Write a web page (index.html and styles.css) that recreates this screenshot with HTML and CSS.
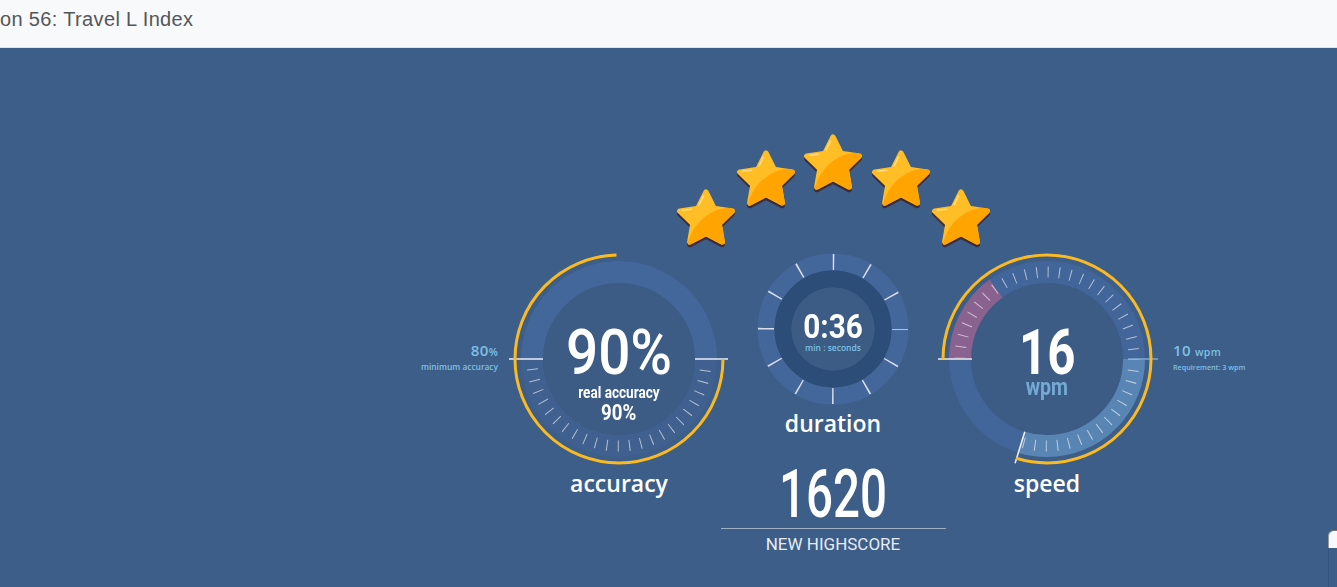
FILE: index.html
```html
<!DOCTYPE html>
<html lang="en">
<head>
<meta charset="utf-8">
<title>Travel L Index - Results</title>
<link rel="stylesheet" href="styles.css">
</head>
<body>
<header class="topbar">
  <h1 class="topbar-title">on 56: Travel L Index</h1>
</header>
<main class="stage">
  <svg class="stars" viewBox="0 0 340 115" width="340" height="115" aria-label="5 stars">
    <defs>
      <path id="star-shape" d="M30 5L37.35 19.89L53.78 22.27L41.89 33.86L44.69 50.23L30 42.5L15.31 50.23L18.11 33.86L6.22 22.27L22.65 19.89Z" stroke-linejoin="round" stroke-width="5"/>
      <mask id="star-mask"><use href="#star-shape" fill="#fff" stroke="#fff"/></mask>
      <g id="star">
        <use href="#star-shape" transform="translate(0 2.4)" fill="#3b2d3c" stroke="#3b2d3c"/>
        <use href="#star-shape" fill="#ffbd26" stroke="#ffbd26"/>
        <circle cx="55.5" cy="61.5" r="43" fill="#ffa400" mask="url(#star-mask)"/>
        <path d="M27.6 8.6L23.8 16.6M8.5 21.6L17 20.6" stroke="#ffe7a0" stroke-width="1.4" stroke-linecap="round" fill="none" opacity=".75"/>
      </g>
    </defs>
    <use href="#star" transform="translate(10 62.6) scale(1.1)"/>
    <use href="#star" transform="translate(70 23.6) scale(1.1)"/>
    <use href="#star" transform="translate(137 7.6) scale(1.1)"/>
    <use href="#star" transform="translate(205 23.6) scale(1.1)"/>
    <use href="#star" transform="translate(265 62.6) scale(1.1)"/>
  </svg>

  <div class="gauges">
    <section class="col">
      <div class="gauge gauge-lg">
        <svg class="dial" viewBox="0 0 240 228" width="240" height="228">
          <defs><clipPath id="acc-lower"><rect x="0" y="122" width="240" height="106"/></clipPath></defs>
          <circle cx="120" cy="120" r="76" fill="#3c5c86"/>
          <path d="M33 120A87 87 0 0 1 207 120" fill="none" stroke="#44679b" stroke-width="22"/>
          <path d="M207 120A87 87 0 0 1 33 120" fill="none" stroke="#40618f" stroke-width="22"/>
          <circle cx="120" cy="120" r="87" fill="none" stroke="rgba(255,255,255,.6)" stroke-width="11" stroke-dasharray="1 10.388" clip-path="url(#acc-lower)"/>
          <line x1="10" y1="120" x2="44" y2="120" stroke="#e9eef5" stroke-width="1.5"/>
          <line x1="196" y1="120" x2="229" y2="120" stroke="#e9eef5" stroke-width="1.5"/>
          <circle cx="120" cy="120" r="104" fill="none" stroke="#fbba22" stroke-width="3" stroke-dasharray="487 1000"/>
        </svg>
        <div class="annot annot-left">
          <div class="annot-value">80<span class="annot-unit">%</span></div>
          <div class="annot-note">minimum accuracy</div>
        </div>
        <div class="gauge-center gauge-center-acc">
          <span class="cond big-acc">90%</span>
          <span class="cond sub-title">real accuracy</span>
          <span class="cond sub-value">90%</span>
        </div>
      </div>
      <div class="label">accuracy</div>
    </section>

    <section class="col">
      <div class="gauge gauge-sm">
        <svg class="dial" viewBox="0 0 160 160" width="160" height="160">
          <circle cx="80" cy="80" r="67" fill="none" stroke="#44679b" stroke-width="17"/>
          <circle cx="80" cy="80" r="50" fill="none" stroke="#2c4d78" stroke-width="17"/>
          <circle cx="80" cy="80" r="41.5" fill="#3c5c86"/>
          <circle cx="80" cy="80" r="67" fill="none" stroke="rgba(255,255,255,.8)" stroke-width="16" stroke-dasharray="1.5 33.58" stroke-dashoffset="0.75"/>
        </svg>
        <div class="gauge-center gauge-center-time">
          <span class="cond time-value">0:36</span>
          <span class="time-unit">min : seconds</span>
        </div>
      </div>
      <div class="label label-duration">duration</div>
      <div class="highscore">
        <div class="hs-score"><span class="cond hs-num">1620</span></div>
        <div class="hs-caption">NEW HIGHSCORE</div>
      </div>
    </section>

    <section class="col">
      <div class="gauge gauge-lg">
        <svg class="dial" viewBox="0 0 240 228" width="240" height="228">
          <defs><clipPath id="spd-ticks"><polygon points="120,120 -10,118 -10,-10 250,-10 250,250 76,263"/></clipPath></defs>
          <circle cx="120" cy="120" r="76" fill="#3c5c86"/>
          <circle cx="120" cy="120" r="87" fill="none" stroke="#42659a" stroke-width="22"/>
          <circle cx="120" cy="120" r="87" fill="none" stroke="#5985b4" stroke-width="22" stroke-dasharray="162.5 1000"/>
          <circle cx="120" cy="120" r="87" fill="none" stroke="#8a6290" stroke-width="22" stroke-dasharray="82 1000" transform="rotate(180 120 120)"/>
          <circle cx="120" cy="120" r="87" fill="none" stroke="rgba(255,255,255,.6)" stroke-width="11" stroke-dasharray="1 10.388" clip-path="url(#spd-ticks)"/>
          <line x1="11" y1="120" x2="45" y2="120" stroke="#e9eef5" stroke-width="1.5"/>
          <line x1="201" y1="120" x2="231" y2="120" stroke="#7fa9cf" stroke-width="1.5"/>
          <line x1="97.8" y1="192.7" x2="88.1" y2="224.2" stroke="#f2f5f9" stroke-width="1.5"/>
          <circle cx="120" cy="120" r="104" fill="none" stroke="#fbba22" stroke-width="3" stroke-dasharray="521 1000" transform="rotate(180 120 120)"/>
        </svg>
        <div class="annot annot-right">
          <div class="annot-value">10 <span class="annot-unit">wpm</span></div>
          <div class="annot-note annot-note-sm">Requirement: 3 wpm</div>
        </div>
        <div class="gauge-center gauge-center-speed">
          <span class="cond big-speed">16</span>
          <span class="cond speed-unit">wpm</span>
        </div>
      </div>
      <div class="label">speed</div>
    </section>
  </div>

  <div class="side-tab"></div>
</main>
</body>
</html>
```

FILE: styles.css
```css
* { box-sizing: border-box; }

html, body {
  margin: 0;
  height: 100%;
}

body {
  background: #3d5e88;
  overflow: hidden;
  font-family: "Open Sans", sans-serif;
}

.topbar {
  height: 48px;
  background: #f8f9fb;
  border-bottom: 1px solid #dfe3e8;
  padding-top: 8px;
}

.topbar-title {
  margin: 0;
  font: 400 20px/23px "Liberation Sans", Arial, sans-serif;
  letter-spacing: 0.35px;
  color: #555659;
}

.stage {
  position: relative;
  height: 539px;
  padding: 76px 0 0 329px;
  display: flex;
  flex-direction: column;
  align-items: center;
}

.stars {
  display: block;
  flex-shrink: 0;
  overflow: visible;
}

.gauges {
  display: flex;
  align-items: flex-start;
}

.col {
  width: 214px;
  display: flex;
  flex-direction: column;
  align-items: center;
}

.gauge {
  position: relative;
  flex-shrink: 0;
}

.gauge-lg {
  width: 240px;
  height: 228px;
  margin: 0 -13px;
}

.gauge-sm {
  width: 160px;
  height: 160px;
  margin-top: 10px;
}

.dial {
  display: block;
  width: 100%;
  height: 100%;
}

.gauge-center {
  position: absolute;
  inset: 0;
  display: flex;
  flex-direction: column;
  align-items: center;
  color: #fff;
  font-family: Roboto, sans-serif;
}

.gauge-center-acc { padding-top: 86px; }
.gauge-center-speed { padding-top: 87px; }
.gauge-center-time { padding-top: 63px; }

.cond {
  display: inline-block;
  white-space: nowrap;
}

.big-acc {
  font-size: 63px;
  line-height: 56px;
  font-weight: 500;
  transform: scaleX(0.9);
}

.sub-title {
  font-size: 16px;
  line-height: 18px;
  font-weight: 700;
  margin-top: 2.5px;
  transform: scaleX(0.85);
}

.sub-value {
  font-size: 22px;
  line-height: 22px;
  font-weight: 700;
  margin-top: 0;
  transform: scaleX(0.85);
}

.time-value {
  font-size: 33px;
  line-height: 30px;
  font-weight: 700;
  transform: scaleX(0.9);
}

.time-unit {
  font-family: "Open Sans", sans-serif;
  font-size: 8.5px;
  line-height: 10px;
  font-weight: 600;
  color: #7cc0e4;
  margin-top: 1px;
}

.big-speed {
  font-size: 63px;
  line-height: 54px;
  font-weight: 700;
  transform: scaleX(0.78);
}

.speed-unit {
  font-size: 23px;
  line-height: 18px;
  font-weight: 700;
  color: #74aad3;
  margin-top: -1px;
  transform: scaleX(0.85);
}

.annot {
  position: absolute;
  top: 104px;
  font-family: "Open Sans", sans-serif;
  font-weight: 600;
  color: #7cc0e4;
  white-space: nowrap;
}

.annot-left {
  right: calc(100% + 1px);
  text-align: right;
}

.annot-right {
  left: calc(100% + 6px);
}

.annot-value {
  font-size: 15px;
  line-height: 15px;
  letter-spacing: 0.3px;
}

.annot-unit {
  font-size: 10.5px;
}

.annot-note {
  font-size: 8.4px;
  line-height: 10px;
  margin-top: 2px;
}

.annot-note-sm {
  font-size: 7.2px;
}

.label {
  margin-top: 5px;
  font-family: "Open Sans", sans-serif;
  font-weight: 600;
  font-size: 23px;
  line-height: 23px;
  color: #fff;
}

.label-duration {
  margin-top: 3px;
}

.highscore {
  width: 225px;
  margin-top: 27px;
  flex-shrink: 0;
  color: #fff;
  font-family: Roboto, sans-serif;
  text-align: center;
}

.hs-score {
  height: 66px;
}

.hs-num {
  font-size: 66px;
  line-height: 66px;
  font-weight: 500;
  transform: scaleX(0.72);
}

.hs-caption {
  border-top: 1px solid #9fb0c6;
  padding-top: 5px;
  font-size: 17px;
  line-height: 20px;
  color: #e6ecf3;
}

.side-tab {
  position: absolute;
  right: 0;
  top: 482px;
  width: 9px;
  height: 18px;
  background: #f8f9fb;
  border-top-left-radius: 6px;
  border-top: 1px solid #777;
  border-left: 1px solid #999;
}

.side-tab::after {
  content: "";
  position: absolute;
  left: -1px;
  top: 17px;
  width: 1px;
  height: 40px;
  background: #36557d;
}
```
